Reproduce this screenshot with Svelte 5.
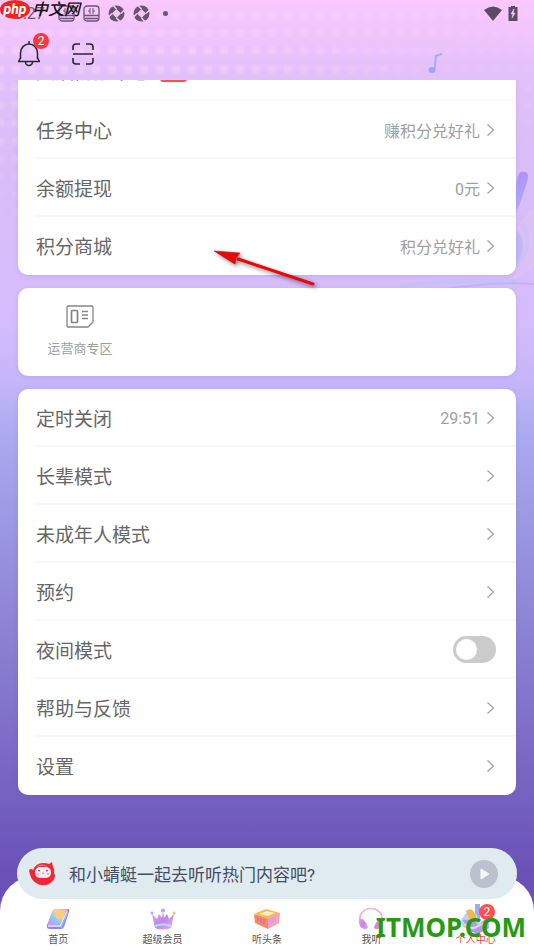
<script lang="ts">
    type Row = { label: string; value?: string; toggle?: boolean };

    const accountRows: Row[] = [
        { label: '任务中心', value: '赚积分兑好礼' },
        { label: '余额提现', value: '0元' },
        { label: '积分商城', value: '积分兑好礼' },
    ];

    const settingRows: Row[] = [
        { label: '定时关闭', value: '29:51' },
        { label: '长辈模式' },
        { label: '未成年人模式' },
        { label: '预约' },
        { label: '夜间模式', toggle: true },
        { label: '帮助与反馈' },
        { label: '设置' },
    ];

    const tabs = [
        { id: 'home', label: '首页' },
        { id: 'vip', label: '超级会员' },
        { id: 'news', label: '听头条' },
        { id: 'listen', label: '我听' },
        { id: 'me', label: '个人中心' },
    ];

    let activeTab = $state('me');
    let nightMode = $state(false);
</script>

{#snippet list(rows: Row[])}
    {#each rows as row}
        {#if row.toggle}
            <label class="row">
                <span>{row.label}</span>
                <input class="switch" type="checkbox" bind:checked={nightMode} />
            </label>
        {:else}
            <button class="row">
                <span>{row.label}</span>
                <span class="value">
                    {row.value ?? ''}
                    <svg width="10" height="14" viewBox="0 0 10 14">
                        <path d="M1.5 1.5 7.5 7l-6 5.5" fill="none" stroke="#a4a4a4" stroke-width="1.3" />
                    </svg>
                </span>
            </button>
        {/if}
    {/each}
{/snippet}

{#snippet disk()}
    <svg width="17" height="17" viewBox="0 0 17 17">
        <rect x="1" y="1" width="15" height="15" rx="3" fill="none" stroke="#6d5672" stroke-width="1.3" />
        <path d="M1 10.5h15M2 13.5h13" stroke="#6d5672" stroke-width="1.4" />
        <path d="M7 3v6M10 3v6M5 6h2M10 6h2" stroke="#6d5672" />
    </svg>
{/snippet}

{#snippet shutter()}
    <svg width="17" height="17" viewBox="0 0 17 17">
        <circle cx="8.5" cy="8.5" r="8" fill="#6a536e" />
        <path d="M8.5 4 13 8.5 8.5 13 4 8.5z" fill="#f6c6fb" />
        <path d="M8.5 4 4.5 0M13 8.5l4-4M8.5 13l4 4M4 8.5l-4 4" stroke="#f6c6fb" stroke-width="1.5" />
    </svg>
{/snippet}

<div class="page">
    <div class="dots"></div>
    <svg class="decor" width="134" height="160" viewBox="0 0 134 160" aria-hidden="true">
        <defs>
            <linearGradient id="wing" x1="0%" y1="0%" x2="0%" y2="100%">
                <stop offset="0%" stop-color="#a58af5" />
                <stop offset="60%" stop-color="#a3a0fb" />
                <stop offset="100%" stop-color="#d5bbf8" />
            </linearGradient>
        </defs>
        <path d="M114 72c1-30 2-48 7-50 9-2 8 5 5 13-3 11-9 25-12 37z" fill="url(#wing)" opacity=".8" />
        <path d="M114 80c7-6 12-18 20-21v58c-8 8-14 10-20 12z" fill="#dcc2f4" opacity=".8" />
        <path d="M115 80c11 4 10 26 0 36z" fill="#adaffd" opacity=".55" />
        <path d="M121 74c10 10 7 30-4 42" fill="none" stroke="#c0c2fa" stroke-width="4" opacity=".5" />
        <path d="M0 134q60-8 118-4v4q-60-3-118 4z" fill="#b7c3f5" opacity=".5" />
        <path d="M30 142q55-11 104-8" fill="none" stroke="#bfa3ea" stroke-width="2" opacity=".5" />
    </svg>

    <header>
        <div class="status">
            <span class="time">3:27</span>
            {@render disk()}
            {@render disk()}
            {@render shutter()}
            {@render shutter()}
            <i class="dot"></i>
            <span class="system">
                <svg width="18" height="15" viewBox="0 0 18 15">
                    <path d="M9 15 0 4q9-7 18 0z" fill="#5f4a63" />
                </svg>
                <svg width="10" height="15" viewBox="0 0 10 15">
                    <path d="M3 0h4v1h2.5v14h-9V1H3z" fill="#5f4a63" />
                    <path d="M6 3 3 8h2l-1 4 3-5H5z" fill="#f4cdfa" stroke="#f4cdfa" stroke-width=".6" />
                </svg>
            </span>
        </div>
        <div class="toolbar">
            <button class="tool" aria-label="消息">
                <svg width="24" height="26" viewBox="0 0 24 26">
                    <g fill="none" stroke="#2d2433" stroke-width="1.5">
                        <path d="M12 0v3M3.5 18v-6a8.5 9 0 0 1 17 0v6" />
                        <path d="M1 20.5h22M3.5 17l-2 3.5M20.5 17l2 3.5M8.5 21a3.5 3.5 0 0 0 7 0" />
                    </g>
                </svg>
                <span class="badge">2</span>
            </button>
            <button class="tool" aria-label="扫一扫">
                <svg width="22" height="22" viewBox="0 0 22 22">
                    <path
                        d="M1 7V4a3 3 0 0 1 3-3h4M14 1h4a3 3 0 0 1 3 3v3M21 15v3a3 3 0 0 1-3 3h-4M8 21H4a3 3 0 0 1-3-3v-3M1 11h20"
                        fill="none"
                        stroke="#2d2433"
                        stroke-width="1.6"
                    />
                </svg>
            </button>
            <svg class="note" width="16" height="22" viewBox="0 0 16 22" aria-hidden="true">
                <ellipse cx="5" cy="18" rx="3.5" ry="3" fill="#9fa3ff" />
                <path d="M7.5 18 9 4q2-1 6-2" fill="none" stroke="#aaaafb" stroke-width="2" />
            </svg>
        </div>
    </header>

    <main>
        <section class="card scrolled">
            <button class="row">
                <span class="with-tag">文娱情报中心 <i class="tag"></i></span>
            </button>
            {@render list(accountRows)}
        </section>

        <section class="card">
            <button class="carrier">
                <svg width="28" height="24" viewBox="0 0 28 24">
                    <g fill="none" stroke="#858585" stroke-width="1.3">
                        <path d="M2 1h24q1 0 1 1v15l-5 5H2q-1 0-1-1V2q0-1 1-1z" />
                        <rect x="5.5" y="5.5" width="6" height="12" rx="1" stroke-width="1.7" />
                        <path d="M16 6.5h6M16 10h6M16 13.5h6" />
                    </g>
                </svg>
                运营商专区
            </button>
        </section>

        <section class="card">
            {@render list(settingRows)}
        </section>
    </main>

    <footer>
        <div class="player">
            <svg width="28" height="26" viewBox="0 0 28 26">
                <path d="M1 9q2-2 4 0 3-7 10-7 4 0 6 1l3-2 1 5q2 3 1 6l1 2q0 6-6 9-7 3-13-1-6-4-7-13z" fill="#ec2935" />
                <path d="M8 6q6-5 12 0-6-2-12 0z" fill="#f98d92" />
                <rect x="7" y="6" width="16" height="11" rx="5" fill="#fbe9ee" />
                <path d="M10 10q1-1 2 0M18 10q1-1 2 0" fill="none" stroke="#444" />
                <path d="M14 12q1 1 2 0M9 13h2M19 13h2" fill="none" stroke="#f4768b" />
            </svg>
            <span>和小蜻蜓一起去听听热门内容吧?</span>
            <button class="play" aria-label="播放">
                <svg width="28" height="28" viewBox="0 0 28 28">
                    <circle cx="14" cy="14" r="14" fill="#bac2cb" />
                    <path d="M11 9v10l8-5z" fill="#f4f6f8" stroke="#f4f6f8" stroke-linejoin="round" />
                </svg>
            </button>
        </div>
        <nav>
            {#each tabs as tab}
                <button class="tab" class:active={tab.id === activeTab} onclick={() => (activeTab = tab.id)}>
                    <span class="tab-icon">
                        {#if tab.id === 'home'}
                            <svg width="24" height="22" viewBox="0 0 24 22">
                                <path d="M8 1h14q2 0 1 3l-5 15q-1 2-3 2H4q-4 0-3-4z" fill="#8e86f5" />
                                <path d="M2 18h12l7-15" fill="none" stroke="#f7e4fb" stroke-width="1.5" />
                                <path d="M8 1h12q2 0 1 2l-6 12q-1 2-3 2H3q-2 0-1-2L6 3z" fill="url(#book)" />
                                <path d="M10 4q4-3 8 0-1 6-5 8-5-2-3-8z" fill="#fbcc7b" />
                                <path d="m15 20 7-16" stroke="#7fd8fa" />
                            </svg>
                        {:else if tab.id === 'vip'}
                            <svg width="26" height="22" viewBox="0 0 26 22">
                                <path d="m2 6 5 5 2-5 3 4 1-8 1 8 3-4 2 5 5-5-3 14q-8 3-16 0z" fill="url(#crown)" />
                                <path d="M5 18q8-3 16 0" fill="none" stroke="#a7e4fa" stroke-width="2" />
                                <circle cx="2" cy="5" r="1.5" fill="#c3a0f3" />
                                <circle cx="13" cy="2.5" r="2" fill="#c49cf3" />
                                <circle cx="24" cy="5" r="1.5" fill="#f4be79" />
                            </svg>
                        {:else if tab.id === 'news'}
                            <svg width="28" height="22" viewBox="0 0 28 22">
                                <path d="m1 6 14 4v11L2 15z" fill="#f58c57" />
                                <path d="m15 10 12-5-1 10-11 6z" fill="#e49be2" />
                                <path d="m1 6 12-5 14 4-12 6z" fill="#fbb753" />
                                <path d="m6 6 8-3 8 2-7 3z" fill="#ffedc0" />
                                <path d="M5 9v4M8 10v5M11 11v5" stroke="#c868e0" stroke-width="1.5" />
                                <path d="m17 18 7-4V9" fill="none" stroke="#fbb27d" stroke-width="2" />
                            </svg>
                        {:else if tab.id === 'listen'}
                            <svg width="26" height="22" viewBox="0 0 26 22">
                                <path d="M2 14C-1-4 27-4 24 14" fill="none" stroke="#f6b1c4" stroke-width="1.7" />
                                <path d="M1 11q4-3 9 8-1 3-4 2-6-2-5-10z" fill="url(#crown)" />
                                <path d="M25 11q-4-3-9 8 1 3 4 2 6-2 5-10z" fill="url(#crown)" />
                            </svg>
                        {:else}
                            <svg width="32" height="32" viewBox="0 0 32 32">
                                <path d="M15 1h5v15h-5z" fill="#9aaef2" />
                                <path d="M1 17 9 6l8 6 3 12-8 4-9-4z" fill="#bcd4f6" />
                                <path d="M6 8q6-4 9 3l2 8q-8 0-11-11z" fill="#f8b548" />
                                <path d="M3 17q10-2 15 5l10-8 1 11-11 6Q7 29 3 17z" fill="#b09be8" />
                                <path d="M5 21q7 7 13 2l9-4" fill="none" stroke="#e3d5fb" stroke-width="2" />
                            </svg>
                            <span class="badge">2</span>
                        {/if}
                    </span>
                    {tab.label}
                </button>
            {/each}
        </nav>
    </footer>

    <svg class="arrow" width="112" height="46" viewBox="0 0 112 46" aria-hidden="true">
        <path d="M26 10 101 35" stroke="#f00505" stroke-width="3" stroke-linecap="round" />
        <path d="m2 2 26 2-4 5-1 6z" fill="#f80000" stroke="#a02020" stroke-width=".6" />
    </svg>
    <div class="mark-php"><b>php</b><span>中文网</span></div>
    <div class="mark-site">ITMOP.COM</div>
</div>

<svg class="defs" width="0" height="0">
    <defs>
        <linearGradient id="book" x1="0%" y1="100%" x2="100%" y2="0%">
            <stop offset="0%" stop-color="#d18cf2" />
            <stop offset="35%" stop-color="#8bc8fa" />
            <stop offset="65%" stop-color="#ffd192" />
            <stop offset="100%" stop-color="#f5a6bf" />
        </linearGradient>
        <linearGradient id="crown" x1="0%" y1="0%" x2="100%" y2="100%">
            <stop offset="0%" stop-color="#f6a5cf" />
            <stop offset="50%" stop-color="#bd86f3" />
            <stop offset="100%" stop-color="#f7a5d4" />
        </linearGradient>
    </defs>
</svg>

<style>
    :global(body) {
        margin: 0;
    }

    .page {
        position: relative;
        display: flex;
        flex-direction: column;
        height: 100vh;
        overflow: hidden;
        font-family: Roboto, "Noto Sans CJK SC", sans-serif;
        background: linear-gradient(
            #fbc8ff 0%,
            #e2c0f9 8%,
            #d8bdf6 18%,
            #d5bcfd 34%,
            #c4b6f8 40%,
            #aaaaf0 46%,
            #9f9ce5 53%,
            #8a7fd1 68%,
            #7461c0 84%,
            #6a51b6 92%
        );
    }

    button {
        margin: 0;
        padding: 0;
        border: 0;
        background: none;
        font: inherit;
        color: inherit;
        cursor: pointer;
    }

    svg {
        display: block;
        flex: none;
    }

    .defs,
    .decor,
    .dots {
        position: absolute;
    }

    .decor {
        top: 150px;
        right: 0;
    }

    .dots {
        inset: 0 0 auto;
        height: 260px;
        background-image: radial-gradient(circle, rgba(255, 214, 255, 0.4) 3px, transparent 6px);
        background-size: 16px 18px;
        background-position: 8px 6px;
        mask-image: linear-gradient(100deg, #000 30%, rgba(0, 0, 0, 0.2) 100%),
            linear-gradient(#000 20%, transparent);
        mask-composite: intersect;
    }

    header {
        position: relative;
        height: 80px;
    }

    .status {
        display: flex;
        align-items: center;
        gap: 8px;
        height: 27px;
        padding: 0 16px 0 14px;
        color: #6d5672;
    }

    .time {
        width: 36px;
        font-size: 16px;
    }

    .dot {
        width: 5px;
        height: 5px;
        margin-left: 5px;
        border-radius: 50%;
        background: #6d5672;
    }

    .system {
        display: flex;
        gap: 6px;
        margin-left: auto;
    }

    .toolbar {
        display: flex;
        align-items: center;
        gap: 31px;
        height: 53px;
        padding: 0 91px 0 17px;
    }

    .tool {
        position: relative;
    }

    .note {
        margin: 18px 0 0 auto;
    }

    .badge {
        position: absolute;
        top: -8px;
        right: -8px;
        width: 16px;
        height: 16px;
        border-radius: 50%;
        background: #fb3640;
        color: #fff;
        font-size: 12px;
        line-height: 16px;
        text-align: center;
    }

    main {
        position: relative;
        display: flex;
        flex: 1;
        flex-direction: column;
        gap: 13px;
        min-height: 0;
        padding: 0 18px;
        overflow: hidden;
    }

    .card {
        flex: none;
        padding-left: 18px;
        border-radius: 10px;
        background: #fff;
        box-shadow: 0 1px 4px rgba(110, 80, 180, 0.15);
    }

    .scrolled {
        margin-top: -37px;
    }

    .row {
        display: flex;
        align-items: center;
        justify-content: space-between;
        box-sizing: border-box;
        width: 100%;
        height: 58px;
        padding-right: 20px;
        border-bottom: 2px solid #f8f8f8;
        color: #666;
        font-size: 19px;
        text-align: left;
    }

    .row:last-child {
        border-bottom-color: transparent;
    }

    .value {
        display: flex;
        align-items: center;
        gap: 6px;
        padding-top: 2px;
        color: #a0a0a0;
        font-size: 16px;
    }

    .with-tag {
        display: flex;
        gap: 10px;
        align-items: center;
        padding-bottom: 2px;
    }

    .tag {
        width: 27px;
        height: 24px;
        border-radius: 3px;
        background: #ff4f55;
    }

    .switch {
        appearance: none;
        width: 43px;
        height: 27px;
        margin: 0;
        padding: 3px;
        border-radius: 14px;
        background: #cbcbcb;
        cursor: pointer;
    }

    .switch::before {
        content: "";
        display: block;
        width: 21px;
        height: 21px;
        border-radius: 50%;
        background: #fff;
    }

    .switch:checked {
        background: #fb3640;
    }

    .switch:checked::before {
        margin-left: auto;
    }

    .carrier {
        display: flex;
        flex-direction: column;
        align-items: center;
        gap: 10px;
        width: 88px;
        height: 88px;
        padding-top: 17px;
        color: #a0a0a0;
        font-size: 13px;
        line-height: 20px;
    }

    footer {
        position: relative;
    }

    .player {
        position: relative;
        display: flex;
        align-items: center;
        gap: 13px;
        height: 51px;
        margin: 0 17px -23px;
        padding: 0 19px 0 11px;
        border-radius: 26px;
        background: #e0ebf0;
        color: #454d62;
        font-size: 17px;
    }

    .play {
        margin-left: auto;
    }

    nav {
        display: grid;
        grid-template-columns: repeat(5, 1fr);
        padding: 32px 6px 3px;
        border-radius: 35px 35px 0 0;
        background: #fff;
    }

    .tab {
        display: flex;
        flex-direction: column;
        align-items: center;
        gap: 3px;
        color: #555;
        font-size: 10px;
        line-height: 14px;
    }

    .tab-icon {
        position: relative;
        display: flex;
        align-items: center;
        justify-content: center;
        width: 28px;
        height: 22px;
    }

    .tab-icon .badge {
        top: -4px;
        right: -5px;
        background: #ff5050;
    }

    .active {
        color: #fb3640;
    }

    .arrow {
        position: absolute;
        top: 249px;
        left: 212px;
        filter: drop-shadow(2px 2px 2px rgba(0, 0, 0, 0.5));
    }

    .mark-php {
        position: absolute;
        top: 0;
        left: 0;
        display: flex;
        align-items: center;
        gap: 2px;
        color: #111;
        font-size: 16px;
        font-style: italic;
        font-weight: 500;
        line-height: 19px;
    }

    .mark-php b {
        width: 30px;
        border-radius: 50%;
        background: #ee2422;
        color: #fff;
        font-size: 14px;
        text-align: center;
    }

    .mark-site {
        position: absolute;
        right: 8px;
        bottom: 5px;
        color: #279a12;
        font-family: "Noto Sans", sans-serif;
        font-size: 26px;
        font-weight: 700;
        line-height: 36px;
    }
</style>
